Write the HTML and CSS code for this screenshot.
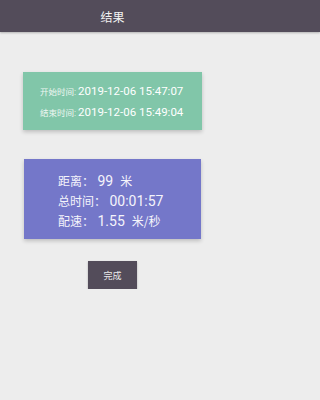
FILE: index.html
```html
<!DOCTYPE html>
<html lang="zh-CN">
<head>
<meta charset="utf-8">
<title>结果</title>
<link rel="stylesheet" href="styles.css">
</head>
<body>
<header class="bar"><div class="bar-inner">结果</div></header>
<main class="content">
  <section class="card times">
    <div class="trow"><span class="tlabel">开始时间:</span><span class="tval">2019-12-06 15:47:07</span></div>
    <div class="trow"><span class="tlabel">结束时间:</span><span class="tval">2019-12-06 15:49:04</span></div>
  </section>
  <section class="card stats">
    <div class="srow"><span class="zh">距离：</span> 99  <span class="zh">米</span></div>
    <div class="srow"><span class="zh">总时间：</span> 00:01:57</div>
    <div class="srow"><span class="zh">配速：</span> 1.55  <span class="zh">米/秒</span></div>
  </section>
  <button class="done">完成</button>
</main>
</body>
</html>
```
FILE: styles.css
```css
* { box-sizing: border-box; }
html, body {
  margin: 0;
  padding: 0;
  background: #ededed;
  font-family: Roboto, "Noto Sans CJK SC", sans-serif;
  color: #fff;
}
.bar {
  height: 32px;
  background: #534c5a;
  box-shadow: 0 1px 2px rgba(0,0,0,0.25);
}
.bar-inner {
  width: 225px;
  height: 32px;
  color: #f2f2f2;
  font-size: 12px;
  display: flex;
  align-items: center;
  justify-content: center;
}
.content {
  width: 225px;
  display: flex;
  flex-direction: column;
  align-items: center;
  padding-top: 40px;
}
.card {
  width: 179px;
  box-shadow: 0 2px 4px rgba(0,0,0,0.2);
}
.times {
  background: #81c6a9;
  height: 58px;
  padding: 8px 0 0 17px;
}
.trow {
  height: 21.5px;
  display: flex;
  align-items: center;
  white-space: nowrap;
}
.tlabel {
  font-size: 8.5px;
  color: #eef6f2;
  margin-right: 2px;
}
.tval {
  font-size: 11.5px;
}
.stats {
  margin-top: 29px;
  width: 177px;
  height: 80px;
  background: #7477c9;
  padding: 12px 0 0 34px;
}
.srow {
  font-size: 14px;
  line-height: 19px;
  white-space: pre;
  color: #f4f4fb;
}
.zh {
  font-family: "Noto Sans CJK SC", sans-serif;
  font-size: 12px;
}
.done {
  margin-top: 22px;
  width: 49px;
  height: 28px;
  border: none;
  background: #534c5a;
  color: #eaeaea;
  font-family: "Noto Sans CJK SC", sans-serif;
  font-size: 9px;
  padding: 0;
  box-shadow: 0 1px 2px rgba(0,0,0,0.25);
}
```
